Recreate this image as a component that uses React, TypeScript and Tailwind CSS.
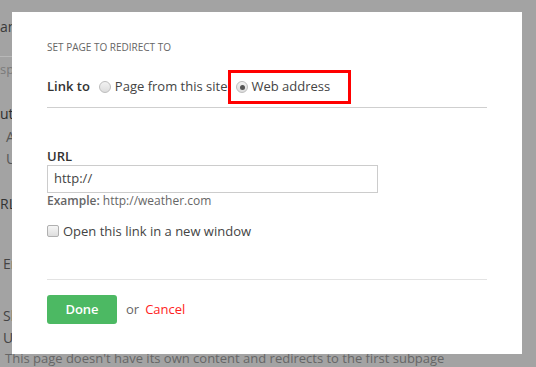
import React from "react";

function Radio({ checked }: { checked?: boolean }) {
  return (
    <span className="inline-flex w-[12px] h-[12px] rounded-full border border-[#bdbdbd] bg-gradient-to-b from-[#f2f2f2] to-[#dddddd] items-center justify-center shrink-0">
      {checked && <span className="w-[5px] h-[5px] rounded-full bg-[#555]" />}
    </span>
  );
}

export default function App() {
  return (
    <div
      className="relative w-[536px] h-[367px] overflow-hidden bg-[#a3a3a3] text-[13px]"
      style={{ fontFamily: '"Open Sans", "Noto Sans", sans-serif' }}
    >
      {/* page under the overlay */}
      <div className="flex flex-col text-[#3a3a3a] leading-none">
        <div className="mt-[20px] text-[14px]">an</div>
        <div className="mt-[22px] h-px w-[40px] bg-[#b8b8b8]" />
        <div className="mt-[6px] text-[13px] text-[#7a7a7a]">sp</div>
        <div className="mt-[31px] text-[14px] text-[#2e2e2e]">ut</div>
        <div className="mt-[9px] pl-[6px] text-[14px] text-[#555]">A</div>
        <div className="mt-[8px] pl-[6px] text-[14px] text-[#555]">U</div>
        <div className="mt-[31px] text-[14px] text-[#333]">RL</div>
        <div className="mt-[46px] pl-[3px] text-[14px] text-[#444]">Er</div>
        <div className="mt-[38px] pl-[3px] text-[14px] text-[#444]">Sl</div>
        <div className="mt-[8px] pl-[3px] text-[14px] text-[#444]">U</div>
        <div className="mt-[7px] pl-[5px] text-[13px] text-[#666] whitespace-nowrap">
          This page doesn't have its own content and redirects to the first subpage
        </div>
      </div>

      {/* modal */}
      <div className="absolute left-[12px] top-[12px] w-[510px] h-[342px] bg-white px-[35px] pt-[28px]">
        <div className="text-[10px] leading-[14px] text-[#666] uppercase">Set page to redirect to</div>

        <div className="mt-[16px] flex items-center h-[34px]">
          <span className="font-semibold text-[#333] mr-[9px]">Link to</span>
          <label className="flex items-center gap-[4px] text-[#444]">
            <Radio />
            <span>Page from this site</span>
          </label>
          <label className="ml-[1px] flex items-center gap-[3px] text-[#444] border-[3px] border-[#f00] h-[34px] pl-[5px] pr-[18px]">
            <Radio checked />
            <span>Web address</span>
          </label>
        </div>
        <div className="mt-[3px] h-px bg-[#cfcfcf]" />

        <div className="mt-[39px] font-semibold text-[#333] leading-[18px]">URL</div>
        <div className="w-[331px] h-[28px] border border-[#cccccc] flex items-center px-[6px] text-[#444]">
          http://
        </div>
        <div className="text-[12px] leading-[16px] text-[#666]">
          <span className="font-semibold">Example:</span> http://weather.com
        </div>

        <label className="mt-[13px] flex items-center gap-[4px] text-[#444] leading-[18px]">
          <span className="w-[12px] h-[12px] rounded-[2px] border border-[#b0b0b0] bg-gradient-to-b from-[#f6f6f6] to-[#dedede] shrink-0" />
          <span>Open this link in a new window</span>
        </label>

        <div className="mt-[39px] h-px bg-[#e3e3e3]" />

        <div className="mt-[15px] flex items-center">
          <button className="w-[70px] h-[29px] rounded-[3px] bg-[#4cb963] text-white text-[13px] font-semibold">
            Done
          </button>
          <span className="ml-[9px] text-[#666]">or</span>
          <span className="ml-[6px] text-[#f22]">Cancel</span>
        </div>
      </div>
    </div>
  );
}
